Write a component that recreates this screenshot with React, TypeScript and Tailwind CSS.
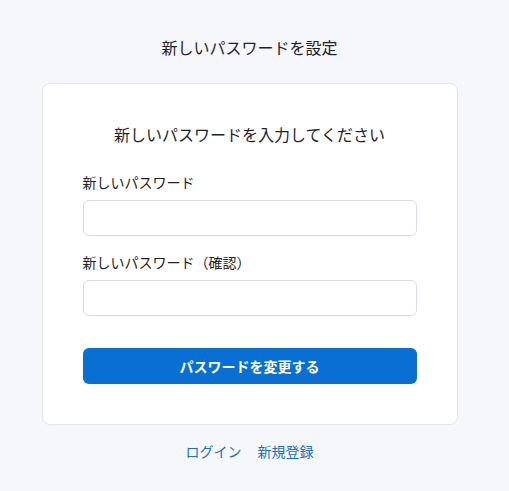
export default function App() {
  return (
    <div
      className="min-h-screen bg-[#f6f7fa] pt-[35px] pr-[10px] flex flex-col items-center text-[#1f2328]"
      style={{ fontFamily: '"Noto Sans CJK JP", "Noto Sans", sans-serif' }}
    >
      <h1 className="text-base leading-6">新しいパスワードを設定</h1>

      <div className="mt-6 w-[416px] bg-white border border-[#e3e5ea] rounded-lg px-10 pt-[38px] pb-[40px]">
        <h2 className="text-base leading-6 text-center">新しいパスワードを入力してください</h2>

        <form className="mt-[26px]" onSubmit={(e) => e.preventDefault()}>
          <label className="block text-sm leading-5">新しいパスワード</label>
          <input
            type="password"
            className="mt-2 w-full h-9 rounded-md border border-[#d9dce2] bg-white outline-none px-3"
          />

          <label className="block mt-4 text-sm leading-5">新しいパスワード（確認）</label>
          <input
            type="password"
            className="mt-2 w-full h-9 rounded-md border border-[#d9dce2] bg-white outline-none px-3"
          />

          <button
            type="submit"
            className="mt-8 w-full h-9 rounded-md bg-[#0a6fd2] text-white text-sm font-bold"
          >
            パスワードを変更する
          </button>
        </form>
      </div>

      <div className="mt-4 flex gap-4 text-sm leading-5 text-[#1a6fc6]">
        <a href="#">ログイン</a>
        <a href="#">新規登録</a>
      </div>
    </div>
  );
}
